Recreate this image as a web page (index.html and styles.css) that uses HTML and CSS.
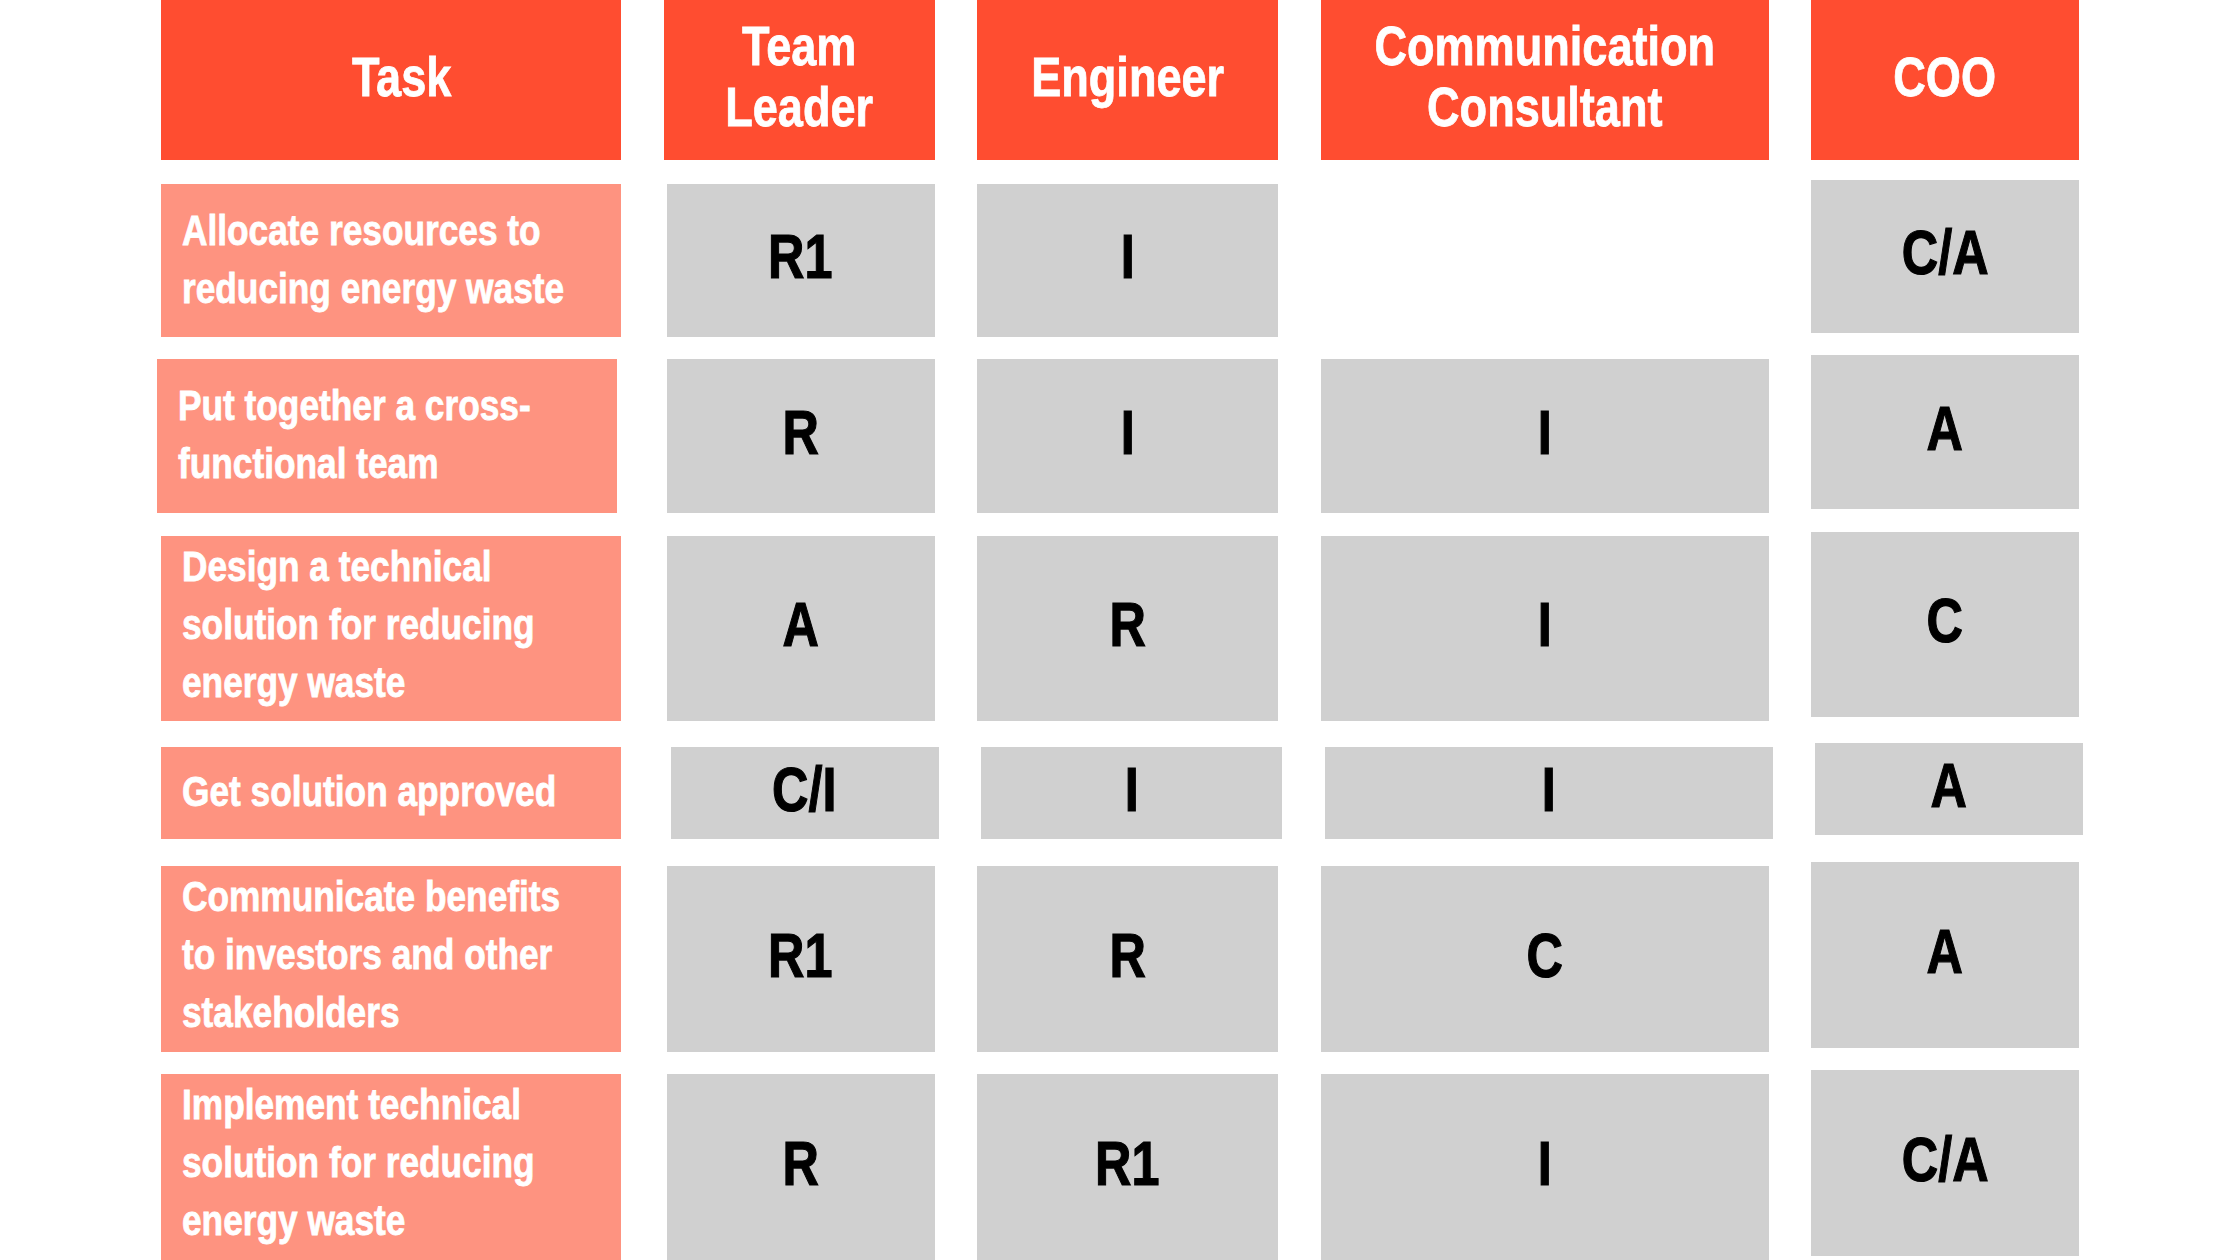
FILE: index.html
```html
<!DOCTYPE html>
<html lang="en">
<head>
<meta charset="utf-8">
<title>RACI chart</title>
<link rel="stylesheet" href="styles.css">
</head>
<body>
<div class="chart">
  <div class="row row-head">
    <div class="cell head head-task"><span class="txt">Task</span></div>
    <div class="cell head"><span class="txt">Team<br>Leader</span></div>
    <div class="cell head"><span class="txt">Engineer</span></div>
    <div class="cell head"><span class="txt">Communication<br>Consultant</span></div>
    <div class="cell head"><span class="txt">COO</span></div>
  </div>

  <div class="row r1">
    <div class="cell task"><span class="txt">Allocate resources to<br>reducing energy waste</span></div>
    <div class="cell val lead"><span class="txt">R1</span></div>
    <div class="cell val"><span class="txt">I</span></div>
    <div class="cell empty"></div>
    <div class="cell val coo"><span class="txt">C/A</span></div>
  </div>

  <div class="row r2">
    <div class="cell task task-left"><span class="txt">Put together a cross-<br>functional team</span></div>
    <div class="cell val lead"><span class="txt">R</span></div>
    <div class="cell val"><span class="txt">I</span></div>
    <div class="cell val"><span class="txt">I</span></div>
    <div class="cell val coo"><span class="txt">A</span></div>
  </div>

  <div class="row r3">
    <div class="cell task task-three"><span class="txt">Design a technical<br>solution for reducing<br>energy waste</span></div>
    <div class="cell val lead"><span class="txt">A</span></div>
    <div class="cell val"><span class="txt">R</span></div>
    <div class="cell val"><span class="txt">I</span></div>
    <div class="cell val coo"><span class="txt">C</span></div>
  </div>

  <div class="row r4">
    <div class="cell task"><span class="txt">Get solution approved</span></div>
    <div class="cell val lead shift"><span class="txt">C/I</span></div>
    <div class="cell val shift"><span class="txt">I</span></div>
    <div class="cell val shift"><span class="txt">I</span></div>
    <div class="cell val coo shift"><span class="txt">A</span></div>
  </div>

  <div class="row r5">
    <div class="cell task task-three"><span class="txt">Communicate benefits<br>to investors and other<br>stakeholders</span></div>
    <div class="cell val lead"><span class="txt">R1</span></div>
    <div class="cell val"><span class="txt">R</span></div>
    <div class="cell val"><span class="txt">C</span></div>
    <div class="cell val coo"><span class="txt">A</span></div>
  </div>

  <div class="row r6">
    <div class="cell task task-three"><span class="txt">Implement technical<br>solution for reducing<br>energy waste</span></div>
    <div class="cell val lead"><span class="txt">R</span></div>
    <div class="cell val"><span class="txt">R1</span></div>
    <div class="cell val"><span class="txt">I</span></div>
    <div class="cell val coo"><span class="txt">C/A</span></div>
  </div>
</div>
</body>
</html>
```

FILE: styles.css
```css
html, body {
  margin: 0;
  padding: 0;
  background: #ffffff;
}

body {
  width: 2240px;
  height: 1260px;
  overflow: hidden;
  font-family: "Liberation Sans", Arial, sans-serif;
  font-weight: 700;
}

.chart {
  margin-left: 161px;
  display: flex;
  flex-direction: column;
}

.row {
  display: grid;
  grid-template-columns: 460px 271px 301px 448px 268px;
  grid-template-rows: minmax(0, 1fr);
  column-gap: 42.5px;
  flex-shrink: 0;
}

.row-head { height: 160px; }
.r1 { margin-top: 24px; height: 153px; }
.r2 { margin-top: 22px; height: 154px; }
.r3 { margin-top: 23px; height: 185px; }
.r4 { margin-top: 26px; height: 92px; }
.r5 { margin-top: 27px; height: 186px; }
.r6 { margin-top: 22px; height: 186px; }

.cell {
  display: flex;
  align-items: center;
  box-sizing: border-box;
  overflow: hidden;
  min-width: 0;
}

.txt {
  display: inline-block;
  white-space: nowrap;
  transform: scaleX(0.82);
  transform-origin: center center;
  -webkit-text-stroke: 0.8px currentColor;
}

.head {
  background: #ff4d30;
  color: #ffffff;
  justify-content: center;
  text-align: center;
  font-size: 55px;
  line-height: 61px;
  padding-bottom: 6px;
}

.head-task {
  padding-left: 22px;
}

.task {
  background: #fe9380;
  color: #ffffff;
  font-size: 43px;
  line-height: 58px;
  padding-left: 21px;
  padding-bottom: 4px;
}

.task .txt {
  transform-origin: left center;
}

.task-left {
  margin-left: -4px;
  margin-right: 4px;
}

.task-three {
  padding-bottom: 10px;
}

.val {
  background: #d0d0d0;
  color: #000000;
  justify-content: center;
  font-size: 63px;
  line-height: 63px;
  padding-bottom: 8px;
}

.val .txt {
  transform: scaleX(0.8);
  -webkit-text-stroke: 1.2px currentColor;
}

.lead {
  margin-left: 3px;
}

.coo {
  margin-top: -4px;
  margin-bottom: 4px;
}

.shift {
  margin-left: 4px;
  margin-right: -4px;
}

.lead.shift {
  margin-left: 7px;
}

.empty {
  background: transparent;
}
```
